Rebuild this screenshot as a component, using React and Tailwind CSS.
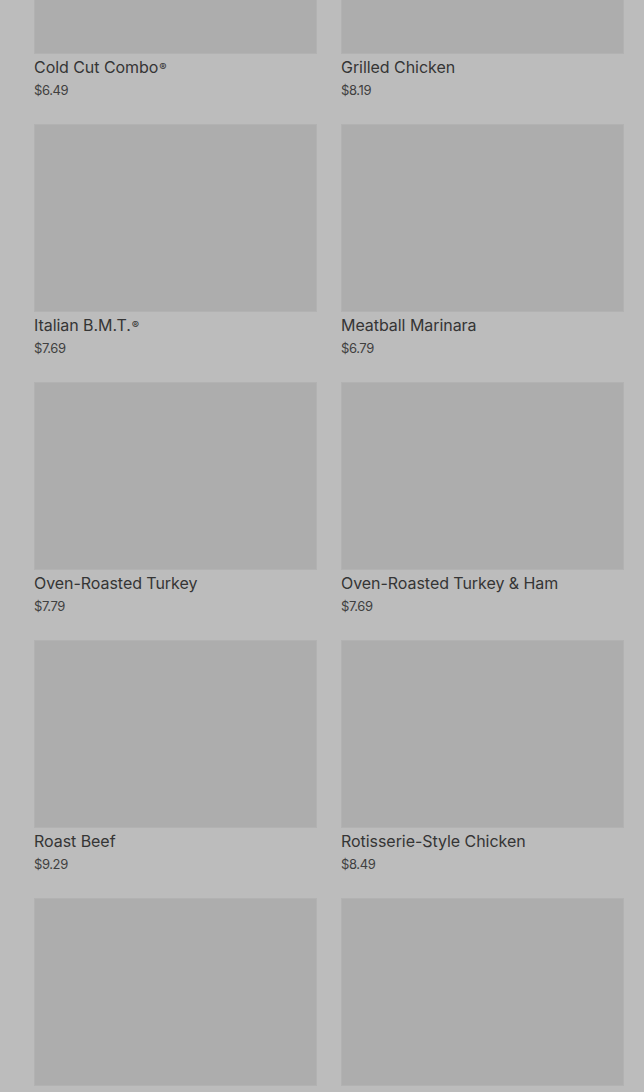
const items = [
  ["Cold Cut Combo®", "$6.49"],
  ["Grilled Chicken", "$8.19"],
  ["Italian B.M.T.®", "$7.69"],
  ["Meatball Marinara", "$6.79"],
  ["Oven-Roasted Turkey", "$7.79"],
  ["Oven-Roasted Turkey & Ham", "$7.69"],
  ["Roast Beef", "$9.29"],
  ["Rotisserie-Style Chicken", "$8.49"],
  [null, null],
  [null, null],
];

function Card({ name, price }) {
  return (
    <div className="flex flex-col">
      <div className="h-[188px] bg-[#adadad] border border-[#b2b2b2]" />
      {name && (
        <>
          <div className="mt-[1px] text-[16px] leading-[24px] text-[#353535] tracking-[-0.05px]">
            {name.endsWith("®") ? (
              <>
                {name.slice(0, -1)}
                <span className="text-[11px] font-semibold align-top relative top-[0px] ml-[1px]">®</span>
              </>
            ) : (
              name
            )}
          </div>
          <div className="mt-[1px] text-[13px] leading-[20px] text-[#404040] tracking-[-0.4px]">{price}</div>
        </>
      )}
    </div>
  );
}

export default function App() {
  return (
    <div
      className="h-[1092px] overflow-hidden bg-[#bcbcbc]"
      style={{ fontFamily: "Inter, 'Liberation Sans', sans-serif" }}
    >
      <div className="mt-[-134px] pl-[34px] pr-[20px] grid grid-cols-2 gap-x-[24px] gap-y-[24px]">
        {items.map(([n, p], i) => (
          <Card key={i} name={n} price={p} />
        ))}
      </div>
    </div>
  );
}
